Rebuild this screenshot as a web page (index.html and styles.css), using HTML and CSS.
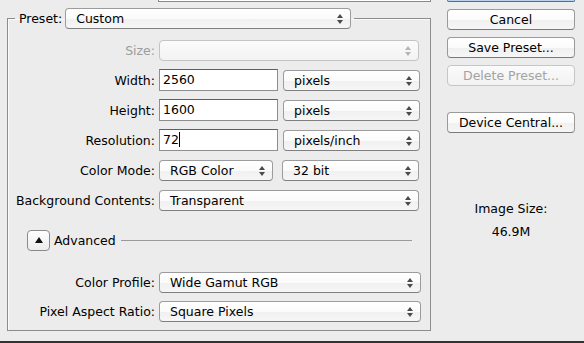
FILE: index.html
```html
<!DOCTYPE html>
<html>
<head>
<title>New Document</title>
<link rel="stylesheet" href="styles.css">
</head>
<body>
<div class="dialog">
<div class="top_strip">
<div class="name_edge"></div>
<div class="ok_edge"></div>
</div>
<div class="main">
<fieldset class="preset_box">
<legend><span class="lbl">Preset:</span><span class="popup preset_pop">Custom</span></legend>
<div class="rows">
<span class="lbl off">Size:</span>
<div class="ctl"><span class="popup full off"></span></div>
<span class="lbl">Width:</span>
<div class="ctl"><span class="field">2560</span><span class="popup unit">pixels</span></div>
<span class="lbl">Height:</span>
<div class="ctl"><span class="field">1600</span><span class="popup unit">pixels</span></div>
<span class="lbl">Resolution:</span>
<div class="ctl"><span class="field">72<span class="caret"></span></span><span class="popup unit">pixels/inch</span></div>
<span class="lbl">Color Mode:</span>
<div class="ctl"><span class="popup mode">RGB Color</span><span class="popup unit">32 bit</span></div>
<span class="lbl">Background Contents:</span>
<div class="ctl"><span class="popup full">Transparent</span></div>
</div>
<div class="advanced">
<span class="disclose"><span class="tri"></span></span>
<span class="adv_text">Advanced</span>
<span class="adv_line"></span>
</div>
<div class="rows rows_adv">
<span class="lbl">Color Profile:</span>
<div class="ctl"><span class="popup full wider">Wide Gamut RGB</span></div>
<span class="lbl">Pixel Aspect Ratio:</span>
<div class="ctl"><span class="popup full wider">Square Pixels</span></div>
</div>
</fieldset>
<div class="side">
<button type="button" class="btn">Cancel</button>
<button type="button" class="btn">Save Preset...</button>
<button type="button" class="btn off" disabled>Delete Preset...</button>
<button type="button" class="btn device">Device Central...</button>
<div class="img_size">
<div>Image Size:</div>
<div>46.9M</div>
</div>
</div>
</div>
<div class="bottom_edge"></div>
</div>
</body>
</html>
```

FILE: styles.css
```css
* {
  box-sizing: border-box;
}
html, body {
  margin: 0;
  height: 343px;
  overflow: hidden;
  background-color: #ececec;
}
body {
  font-family: "DejaVu Sans", sans-serif;
  font-size: 12.5px;
  color: #000;
}
.dialog {
  height: 343px;
  display: flex;
  flex-direction: column;
}
.top_strip {
  height: 3px;
  display: flex;
}
.name_edge {
  margin-left: 158px;
  width: 273px;
  height: 2px;
  background-color: #fff;
  border: 1px solid #8a8a8a;
  border-top: none;
}
.ok_edge {
  margin-left: 16px;
  width: 128px;
  height: 2px;
  background-color: #b9d3ee;
  border: 1px solid #4d6f9e;
  border-top: none;
  border-radius: 0 0 4px 4px;
}
.main {
  display: flex;
  padding: 5px 0 0 7px;
}
.preset_box {
  width: 424px;
  height: 323px;
  margin: 0;
  padding: 0;
  border: 1px solid #8c8c8c;
  box-shadow: inset 1px 1px 0 #fafafa;
}
.preset_box legend {
  margin-left: 7px;
  padding: 0 3px 0 4px;
  display: flex;
  align-items: center;
  gap: 3px;
  height: 21px;
}
.lbl {
  text-align: right;
  white-space: nowrap;
  line-height: 21px;
}
.lbl.off {
  color: #9d9d9d;
}
.popup {
  position: relative;
  display: block;
  height: 21px;
  line-height: 19px;
  padding-left: 10px;
  border: 1px solid #9c9c9c;
  border-bottom-color: #7f7f7f;
  border-radius: 4px;
  background: linear-gradient(#ffffff 0%, #fbfbfb 50%, #f0f0f0 51%, #f6f6f6 100%);
  white-space: nowrap;
}
.popup::before,
.popup::after {
  content: "";
  position: absolute;
  right: 7px;
  border-left: 3px solid transparent;
  border-right: 3px solid transparent;
}
.popup::before {
  top: 5px;
  border-bottom: 4px solid #4a4a4a;
}
.popup::after {
  top: 11px;
  border-top: 4px solid #4a4a4a;
}
.popup.off {
  border-color: #c4c4c4;
  background: linear-gradient(#fbfbfb, #f3f3f3);
}
.popup.off::before {
  border-bottom-color: #b5b5b5;
}
.popup.off::after {
  border-top-color: #b5b5b5;
}
.preset_pop {
  width: 286px;
}
.rows {
  display: grid;
  grid-template-columns: 147px 262px;
  column-gap: 4px;
  row-gap: 9px;
  margin-top: 11px;
}
.ctl {
  display: flex;
  gap: 5px;
}
.popup.full {
  width: 260px;
}
.popup.full.wider {
  width: 262px;
}
.popup.unit {
  width: 137px;
}
.popup.mode {
  width: 114px;
  margin-right: 4px;
}
.field {
  display: block;
  width: 119px;
  height: 22px;
  margin-top: -1px;
  line-height: 20px;
  padding-left: 3px;
  background-color: #fff;
  border: 1px solid #8e8e8e;
  border-top-color: #5f5f5f;
}
.caret {
  display: inline-block;
  width: 1px;
  height: 15px;
  background-color: #000;
  vertical-align: -3px;
}
.advanced {
  display: flex;
  align-items: center;
  margin: 19px 0 0 19px;
  height: 21px;
}
.disclose {
  width: 23px;
  height: 21px;
  border: 1px solid #8a8a8a;
  border-radius: 4px;
  background: linear-gradient(#ffffff, #ececec);
  display: flex;
  align-items: center;
  justify-content: center;
}
.tri {
  border-left: 4px solid transparent;
  border-right: 4px solid transparent;
  border-bottom: 6px solid #111;
  margin-top: -1px;
}
.adv_text {
  margin-left: 4px;
}
.adv_line {
  height: 1px;
  width: 291px;
  margin-left: 5px;
  background-color: #9a9a9a;
}
.rows_adv {
  margin-top: 21px;
  row-gap: 8px;
}
.side {
  width: 128px;
  margin: 1px 0 0 16px;
  display: flex;
  flex-direction: column;
  gap: 7px;
}
.btn {
  width: 128px;
  height: 21px;
  padding: 0;
  font-family: "DejaVu Sans", sans-serif;
  font-size: 12.5px;
  color: #000;
  border: 1px solid #9a9a9a;
  border-bottom-color: #7a7a7a;
  border-radius: 4px;
  background: linear-gradient(#ffffff 0%, #fbfbfb 50%, #f0f0f0 51%, #f6f6f6 100%);
}
.btn.off {
  color: #a3a3a3;
  border-color: #c6c6c6;
  background: linear-gradient(#fbfbfb, #f2f2f2);
}
.btn.device {
  margin-top: 19px;
}
.img_size {
  margin-top: 57px;
  text-align: center;
  line-height: 23px;
}
.bottom_edge {
  margin-top: auto;
  height: 2px;
  background-color: #333;
}
```
